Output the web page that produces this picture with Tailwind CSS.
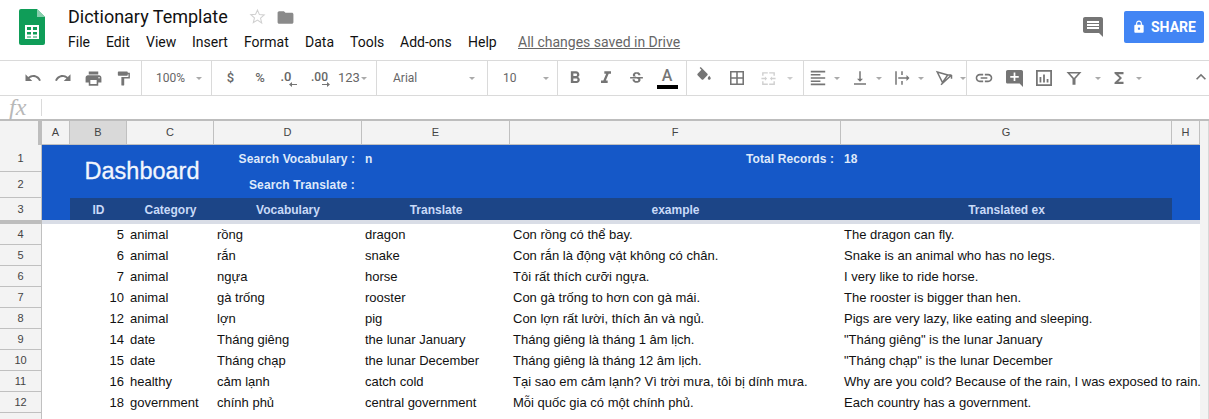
<!doctype html>
<html lang="en"><head><meta charset="utf-8"><title>Dictionary Template</title>
<script src="https://cdn.jsdelivr.net/npm/@tailwindcss/browser@4"></script></head>
<body class="w-[1209px] h-[419px] overflow-hidden bg-white font-['Roboto',sans-serif]">
<!-- title bar -->
<header class="relative h-[60px] flex pl-[19px] pt-[9px]">
  <svg class="w-[26px] h-[36px] shrink-0" viewBox="0 0 26 36"><path d="M2 0H18L26 8V34a2 2 0 0 1-2 2H2a2 2 0 0 1-2-2V2a2 2 0 0 1 2-2z" fill="#0f9d58"/><path d="M18 0L26 8H18z" fill="#87ceac"/><path fill="#fff" fill-rule="evenodd" d="M6 16H20V30H6zM8 18V21H12V18zM14 18V21H18V18zM8 23V25.500H12V23zM14 23V25.500H18V23zM8 27.500V28.500H12V27.500zM14 27.500V28.500H18V27.500z"/></svg>
  <div class="ml-[23px] flex flex-col">
    <div class="flex items-center h-[17px] mt-[-1px]">
      <span class="text-[18px] leading-[17px] text-[#111] w-[180px] whitespace-nowrap">Dictionary Template</span>
      <svg class="w-[17px] h-[17px] ml-[1px]" viewBox="0 0 24 24"><path d="M12 3l2.700 6.300 6.800.6-5.200 4.500 1.600 6.700L12 17l-5.900 3.600 1.600-6.700-5.200-4.500 6.800-.6z" fill="none" stroke="#d0d0d0" stroke-width="1.500"/></svg>
      <svg class="w-[19px] h-[19px] ml-[10px] translate-y-[1px]" viewBox="0 0 24 24"><path fill="#8a8a8a" d="M10 4H4c-1.100 0-2 .9-2 2v12c0 1.100.9 2 2 2h16c1.100 0 2-.9 2-2V8c0-1.100-.9-2-2-2h-8l-2-2z"/></svg>
    </div>
    <nav class="flex text-[14px] leading-[20px] text-[#111] mt-[7px] whitespace-nowrap">
      <span class="w-[38px]">File</span><span class="w-[40px]">Edit</span><span class="w-[46px]">View</span><span class="w-[52px]">Insert</span><span class="w-[61px]">Format</span><span class="w-[45px]">Data</span><span class="w-[50px]">Tools</span><span class="w-[68px]">Add-ons</span><span class="w-[50px]">Help</span><span class="text-[#666] underline">All changes saved in Drive</span>
    </nav>
  </div>
  <div class="absolute left-[1083px] top-[17px]"><svg class="w-[20px] h-[20px]" viewBox="2 2 20 20"><path fill="#757575" d="M21.990 4c0-1.100-.89-2-1.990-2H4c-1.100 0-2 .9-2 2v12c0 1.100.9 2 2 2h14l4 4-.01-18zM18 14H6v-2h12v2zm0-3H6V9h12v2zm0-3H6V6h12v2z"/></svg></div>
  <div class="absolute left-[1124px] top-[11px] w-[80px] h-[32px] rounded-[2px] bg-[#4285f4] flex items-center pl-[8px] text-white text-[14px] font-bold">
    <svg class="w-[14px] h-[14px]" viewBox="0 0 24 24"><path fill="#fff" d="M18 8h-1V6c0-2.760-2.240-5-5-5S7 3.240 7 6v2H6c-1.100 0-2 .9-2 2v10c0 1.100.9 2 2 2h12c1.100 0 2-.9 2-2V10c0-1.100-.9-2-2-2zm-6 9c-1.100 0-2-.9-2-2s.9-2 2-2 2 .9 2 2-.9 2-2 2zm3.100-9H8.900V6c0-1.710 1.390-3.100 3.100-3.100 1.710 0 3.100 1.390 3.100 3.100v2z"/></svg>
    <span class="ml-[5px]">SHARE</span>
  </div>
</header>
<!-- toolbar -->
<div class="h-[36px] border-y border-[#dadada] flex items-center text-[#666] text-[12px] whitespace-nowrap">
  <div class="w-[142px] h-full border-r border-[#dadada] flex items-center pl-[18px]">
    <span class="w-[30px] flex justify-center"><svg class="w-[18px] h-[18px]" viewBox="0 0 24 24"><path fill="#757575" d="M12.500 8c-2.650 0-5.050.99-6.900 2.600L2 7v9h9l-3.620-3.620c1.390-1.160 3.160-1.880 5.120-1.880 3.540 0 6.550 2.310 7.600 5.500l2.370-.78C21.080 11.030 17.150 8 12.500 8z"/></svg></span>
    <span class="w-[30px] flex justify-center"><svg class="w-[18px] h-[18px]" viewBox="0 0 24 24"><path fill="#757575" d="M18.400 10.600C16.550 8.990 14.150 8 11.500 8c-4.650 0-8.580 3.030-9.960 7.220L3.900 16c1.050-3.190 4.050-5.500 7.600-5.500 1.950 0 3.730.72 5.120 1.880L13 16h9V7l-3.600 3.600z"/></svg></span>
    <span class="w-[30px] flex justify-center"><svg class="w-[19px] h-[19px]" viewBox="0 0 24 24"><path fill="#757575" d="M19 8H5c-1.660 0-3 1.340-3 3v6h4v4h12v-4h4v-6c0-1.660-1.340-3-3-3zm-3 11H8v-5h8v5zm3-7c-.55 0-1-.45-1-1s.45-1 1-1 1 .45 1 1-.45 1-1 1zm-1-9H6v4h12V3z"/></svg></span>
    <span class="w-[30px] flex justify-center"><svg class="w-[17px] h-[17px]" viewBox="0 0 24 24"><path fill="#757575" d="M18 4V3c0-.55-.45-1-1-1H5c-.55 0-1 .45-1 1v4c0 .55.45 1 1 1h12c.55 0 1-.45 1-1V6h1v4H9v11c0 .55.45 1 1 1h2c.55 0 1-.45 1-1v-9h8V4h-3z"/></svg></span>
  </div>
  <div class="w-[70px] h-full border-r border-[#dadada] flex items-center pl-[14px]">
    <span class="w-[40px]">100%</span><span class="border-x-[3px] border-t-[3px] border-x-transparent border-t-[#aaa]"></span>
  </div>
  <div class="w-[165px] h-full border-r border-[#dadada] flex items-center text-[13px]">
    <span class="w-[37px] text-center font-medium">$</span>
    <span class="w-[30px] text-center font-medium ml-[-8px] pl-[8px]">%</span>
    <span class="w-[30px] relative text-center text-[13px] font-medium leading-[12px] -translate-y-[1px]">.0<svg class="absolute left-[18px] top-[11px] w-[8px] h-[5px]" viewBox="0 0 8 5"><path fill="#757575" d="M0 2.500L3 0V2H8V3H3V5z"/></svg></span>
    <span class="w-[30px] relative text-right pr-[3px] text-[12px] font-medium leading-[12px] -translate-y-[1px]">.00<svg class="absolute left-[21px] top-[11px] w-[8px] h-[5px]" viewBox="0 0 8 5"><path fill="#757575" d="M8 2.500L5 0V2H0V3H5V5z"/></svg></span>
    <span class="w-[30px] pl-[7px] text-[13px]">123</span><span class="border-x-[3px] border-t-[3px] border-x-transparent border-t-[#aaa]"></span>
  </div>
  <div class="w-[111px] h-full border-r border-[#dadada] flex items-center pl-[16px]">
    <span class="w-[76px]">Arial</span><span class="border-x-[3px] border-t-[3px] border-x-transparent border-t-[#aaa]"></span>
  </div>
  <div class="w-[70px] h-full border-r border-[#dadada] flex items-center pl-[15px]">
    <span class="w-[40px]">10</span><span class="border-x-[3px] border-t-[3px] border-x-transparent border-t-[#aaa]"></span>
  </div>
  <div class="w-[129px] h-full border-r border-[#dadada] flex items-center pl-[2px]">
    <span class="w-[30px] flex justify-center"><svg class="w-[20px] h-[20px]" viewBox="0 0 24 24"><path fill="#757575" d="M15.600 10.790c.97-.67 1.650-1.770 1.650-2.790 0-2.260-1.750-4-4-4H7v14h7.040c2.090 0 3.710-1.700 3.710-3.790 0-1.520-.86-2.820-2.150-3.420zM10 6.500h3c.83 0 1.500.67 1.500 1.500s-.67 1.500-1.500 1.500h-3v-3zm3.500 9H10v-3h3.500c.83 0 1.500.67 1.500 1.500s-.67 1.500-1.500 1.500z"/></svg></span>
    <span class="w-[31px] flex justify-center"><svg class="w-[20px] h-[20px]" viewBox="0 0 24 24"><path fill="#757575" d="M10 4v3h2.210l-3.420 8H6v3h8v-3h-2.210l3.420-8H18V4z"/></svg></span>
    <span class="w-[30px] flex justify-center"><svg class="w-[17px] h-[17px]" viewBox="0 0 24 24"><path fill="#757575" d="M7.240 8.750c-.26-.48-.39-1.030-.39-1.670 0-.61.13-1.160.4-1.670.26-.5.63-.93 1.110-1.290.48-.35 1.050-.63 1.700-.83.66-.19 1.390-.29 2.180-.29.81 0 1.540.11 2.210.34.66.22 1.230.54 1.690.94.47.4.83.88 1.080 1.430.25.55.38 1.150.38 1.810h-3.010c0-.31-.05-.59-.15-.85-.09-.27-.24-.49-.44-.68-.2-.19-.45-.33-.75-.44-.3-.1-.66-.16-1.060-.16-.39 0-.74.04-1.030.13-.29.09-.53.21-.72.36-.19.16-.34.34-.44.55-.1.21-.15.43-.15.66 0 .48.25.88.74 1.210.38.25.77.48 1.410.7H7.390c-.05-.08-.11-.17-.15-.25zM21 12v-2H3v2h9.620c.18.07.4.14.55.2.37.17.66.34.87.51.21.17.35.36.43.57.07.2.11.43.11.69 0 .23-.05.45-.14.66-.09.2-.23.38-.42.53-.19.15-.42.26-.71.35-.29.08-.63.13-1.010.13-.43 0-.83-.04-1.180-.13s-.66-.23-.91-.42c-.25-.19-.45-.44-.59-.75-.14-.31-.25-.76-.25-1.210H6.400c0 .55.08 1.130.24 1.580.16.45.37.85.65 1.210.28.35.6.66.98.92.37.26.78.48 1.220.65.44.17.9.3 1.380.39.48.08.96.13 1.440.13.8 0 1.530-.09 2.180-.28s1.210-.45 1.670-.79c.46-.34.82-.77 1.070-1.270s.38-1.070.38-1.710c0-.6-.1-1.140-.31-1.610-.05-.11-.11-.23-.17-.33H21z"/></svg></span>
    <span class="w-[32px] flex flex-col items-center"><span class="text-[16px] leading-[16px] text-[#757575] font-medium">A</span><span class="w-[21px] h-[4px] bg-black mt-[1px]"></span></span>
  </div>
  <div class="w-[117px] h-full border-r border-[#dadada] flex items-center pl-[2px]">
    <span class="w-[30px] flex justify-center"><svg class="w-[18px] h-[18px] -translate-y-[2px]" viewBox="0 0 24 24"><path fill="#757575" d="M16.560 8.940L7.620 0 6.210 1.410l2.380 2.380-5.150 5.150c-.59.59-.59 1.540 0 2.120l5.500 5.500c.29.29.68.44 1.060.44s.77-.15 1.060-.44l5.500-5.500c.59-.58.59-1.530 0-2.120zM19 11.500s-2 2.170-2 3.500c0 1.100.9 2 2 2s2-.9 2-2c0-1.330-2-3.500-2-3.500z"/></svg></span>
    <span class="w-[35px] flex justify-center"><svg class="w-[14px] h-[14px]" viewBox="3 3 18 18"><path fill="#757575" d="M3 3v18h18V3H3zm8 16H5v-6h6v6zm0-8H5V5h6v6zm8 8h-6v-6h6v6zm0-8h-6V5h6v6z"/></svg></span>
    <span class="w-[28px] flex justify-center"><svg class="w-[17px] h-[17px]" viewBox="0 0 24 24"><path fill="#d0d0d0" d="M3 3h8v2H5v3H3zM13 3h8v5h-2V5h-6zM3 16h2v3h6v2H3zM19 16h2v5h-8v-2h6zM2 11h5V9l3 3-3 3v-2H2zM22 11h-5V9l-3 3 3 3v-2h5z"/></svg></span>
    <span class="ml-[5px] border-x-[3px] border-t-[3px] border-x-transparent border-t-[#ccc]"></span>
  </div>
  <div class="w-[163px] h-full border-r border-[#dadada] flex items-center pl-[6px]">
    <span class="w-[17px] flex justify-center"><svg class="w-[16px] h-[16px] shrink-0" viewBox="2 2 20 20"><path fill="#757575" d="M15 15H3v2h12v-2zm0-8H3v2h12V7zM3 13h18v-2H3v2zm0 8h18v-2H3v2zM3 3v2h18V3H3z"/></svg></span>
    <span class="ml-[8px] mr-[11px] border-x-[3px] border-t-[3px] border-x-transparent border-t-[#aaa]"></span>
    <span class="w-[17px] flex justify-center"><svg class="w-[18px] h-[18px] shrink-0" viewBox="0 0 24 24"><path fill="#757575" d="M16 13h-3V3h-2v10H8l4 4 4-4zM4 19v2h16v-2H4z"/></svg></span>
    <span class="ml-[8px] mr-[11px] border-x-[3px] border-t-[3px] border-x-transparent border-t-[#aaa]"></span>
    <span class="w-[17px] flex justify-center"><svg class="w-[18px] h-[18px] shrink-0" viewBox="0 0 24 24"><path fill="#757575" d="M3 3h2v18H3zM11 3h2v5h-2zM11 16h2v5h-2zM7 11h11V8l4 4-4 4v-3H7z"/></svg></span>
    <span class="ml-[8px] mr-[11px] border-x-[3px] border-t-[3px] border-x-transparent border-t-[#aaa]"></span>
    <span class="w-[17px] flex justify-center"><svg class="w-[18px] h-[18px] shrink-0" viewBox="0 0 24 24"><path fill="none" stroke="#757575" stroke-width="2" d="M3 4L17 8 10 18zM8 21L22 8M22 8H17M22 8V13"/></svg></span>
    <span class="ml-[8px] border-x-[3px] border-t-[3px] border-x-transparent border-t-[#aaa]"></span>
  </div>
  <div class="relative flex-1 h-full flex items-center pl-[2px]">
    <span class="w-[30px] flex justify-center"><svg class="w-[20px] h-[20px]" viewBox="0 0 24 24"><path fill="#757575" d="M3.900 12c0-1.710 1.390-3.100 3.100-3.100h4V7H7c-2.760 0-5 2.240-5 5s2.240 5 5 5h4v-1.900H7c-1.710 0-3.100-1.390-3.100-3.100zM8 13h8v-2H8v2zm9-6h-4v1.900h4c1.710 0 3.100 1.390 3.100 3.100s-1.390 3.100-3.100 3.100h-4V17h4c2.760 0 5-2.240 5-5s-2.240-5-5-5z"/></svg></span>
    <span class="w-[30px] flex justify-center"><svg class="w-[17px] h-[17px]" viewBox="2 2 20 20"><path fill="#757575" d="M22 4c0-1.100-.89-2-2-2H4c-1.100 0-2 .9-2 2v12c0 1.100.9 2 2 2h14l4 4zM17 11h-4v4h-2v-4H7V9h4V5h2v4h4z"/></svg></span>
    <span class="w-[30px] flex justify-center"><svg class="w-[16px] h-[16px]" viewBox="3 3 18 18"><path fill="#757575" fill-rule="evenodd" d="M3 3H21V21H3zM5 5V19H19V5zM7 11H9V17H7zM11 8H13V17H11zM15 13H17V17H15z"/></svg></span>
    <span class="w-[30px] flex justify-center"><svg class="w-[18px] h-[18px]" viewBox="0 0 24 24"><path fill="#757575" fill-rule="evenodd" d="M2 4H22L14 13V21H10V13zM6.500 6L12 12 17.500 6z"/></svg></span>
    <span class="ml-[6px] mr-[9px] border-x-[3px] border-t-[3px] border-x-transparent border-t-[#aaa]"></span>
    <span class="w-[18px] flex justify-center"><svg class="w-[18px] h-[18px]" viewBox="0 0 24 24"><path fill="#757575" d="M18 4H6v2l6.500 6L6 18v2h12v-3h-7l5-5-5-5h7z"/></svg></span>
    <span class="ml-[8px] border-x-[3px] border-t-[3px] border-x-transparent border-t-[#aaa]"></span>
    <svg class="absolute left-[224px] top-[6px] w-[20px] h-[20px]" viewBox="0 0 24 24"><path fill="#757575" d="M7.410 15.410L12 10.830l4.590 4.580L18 14l-6-6-6 6z"/></svg>
  </div>
</div>
<!-- formula bar -->
<div class="h-[23px] flex items-center">
  <span class="w-[41px] pl-[9px] font-['Liberation_Serif',serif] italic text-[24px] leading-[23px] text-[#b8b8b8]">fx</span>
  <span class="w-px h-[17px] bg-[#dadada]"></span>
</div>
<!-- sheet -->
<div class="h-[300px] overflow-hidden grid grid-cols-[42px_28px_57px_87px_148px_148px_331px_331px_28px_9px] grid-rows-[24px_27px_26px_22px_4px_repeat(9,21px)_21px_5px] border-t-2 border-[#bdbdbd] text-[13px] font-['Liberation_Sans',Arial,sans-serif] text-[#111] whitespace-nowrap">
  <!-- column headers -->
  <div class="bg-[#f3f3f3] border-r-[4px] border-[#bdbdbd]"></div>
  <div class="bg-[#f3f3f3] border-r border-b border-[#c0c0c0] flex items-center justify-center text-[11px] text-[#444]">A</div>
  <div class="bg-[#d9d9d9] border-r border-b border-[#c0c0c0] flex items-center justify-center text-[11px] text-[#444]">B</div>
  <div class="bg-[#f3f3f3] border-r border-b border-[#c0c0c0] flex items-center justify-center text-[11px] text-[#444]">C</div>
  <div class="bg-[#f3f3f3] border-r border-b border-[#c0c0c0] flex items-center justify-center text-[11px] text-[#444]">D</div>
  <div class="bg-[#f3f3f3] border-r border-b border-[#c0c0c0] flex items-center justify-center text-[11px] text-[#444]">E</div>
  <div class="bg-[#f3f3f3] border-r border-b border-[#c0c0c0] flex items-center justify-center text-[11px] text-[#444]">F</div>
  <div class="bg-[#f3f3f3] border-r border-b border-[#c0c0c0] flex items-center justify-center text-[11px] text-[#444]">G</div>
  <div class="bg-[#f3f3f3] border-r border-b border-[#c0c0c0] flex items-center justify-center text-[11px] text-[#444]">H</div>
  <div class="row-span-16 bg-[#f3f3f3] border-r border-[#d8d8d8]"></div>
  <!-- row 1 -->
  <div class="bg-[#f3f3f3] border-r border-b border-[#c0c0c0] flex items-center justify-center text-[11px] text-[#444]">1</div>
  <div class="bg-[#1558c8]"></div>
  <div class="col-span-2 row-span-2 bg-[#1558c8] flex items-center justify-center text-[23.500px] text-[#f2f6fd] [-webkit-text-stroke:0.3px_#f2f6fd]">Dashboard</div>
  <div class="bg-[#1558c8] flex items-center justify-end pr-[7px] text-[12px] font-bold tracking-[0.1px] text-[#dfe9fa]">Search Vocabulary :</div>
  <div class="bg-[#1558c8] flex items-center pl-[3px] text-[12px] font-bold text-[#dfe9fa]">n</div>
  <div class="bg-[#1558c8] flex items-center justify-end pr-[7px] text-[12px] font-bold tracking-[0.1px] text-[#dfe9fa]">Total Records :</div>
  <div class="bg-[#1558c8] flex items-center pl-[3px] text-[12px] font-bold text-[#dfe9fa]">18</div>
  <div class="bg-[#1558c8]"></div>
  <!-- row 2 -->
  <div class="bg-[#f3f3f3] border-r border-b border-[#c0c0c0] flex items-center justify-center text-[11px] text-[#444]">2</div>
  <div class="bg-[#1558c8]"></div>
  <div class="bg-[#1558c8] flex items-center justify-end pr-[7px] text-[12px] font-bold tracking-[0.15px] text-[#dfe9fa]">Search Translate :</div>
  <div class="col-span-4 bg-[#1558c8]"></div>
  <!-- row 3 -->
  <div class="bg-[#f3f3f3] border-r border-[#c0c0c0] flex items-center justify-center text-[11px] text-[#444]">3</div>
  <div class="bg-[#1558c8]"></div>
  <div class="bg-[#1c4587] flex items-center justify-center pt-[1px] text-[12px] font-bold text-[#c9daf8]">ID</div>
  <div class="bg-[#1c4587] flex items-center justify-center pt-[1px] text-[12px] font-bold text-[#c9daf8]">Category</div>
  <div class="bg-[#1c4587] flex items-center justify-center pt-[1px] text-[12px] font-bold text-[#c9daf8]">Vocabulary</div>
  <div class="bg-[#1c4587] flex items-center justify-center pt-[1px] text-[12px] font-bold text-[#c9daf8]">Translate</div>
  <div class="bg-[#1c4587] flex items-center justify-center pt-[1px] text-[12px] font-bold text-[#c9daf8]">example</div>
  <div class="bg-[#1c4587] flex items-center justify-center pt-[1px] text-[12px] font-bold text-[#c9daf8]">Translated ex</div>
  <div class="bg-[#1558c8]"></div>
  <!-- frozen divider -->
  <div class="bg-[#bdbdbd]"></div>
  <div class="col-span-8 bg-[#d9dde6]"></div>
  <!-- row 4 -->
  <div class="bg-[#f3f3f3] border-r border-b border-[#c0c0c0] flex items-center justify-center text-[11px] text-[#444]">4</div><div></div>
  <div class="flex items-center justify-end pr-[3px]">5</div><div class="flex items-center pl-[3px]">animal</div><div class="flex items-center pl-[3px]">rồng</div><div class="flex items-center pl-[3px]">dragon</div><div class="flex items-center pl-[3px]">Con rồng có thể bay.</div><div class="flex items-center pl-[3px]">The dragon can fly.</div><div></div>
  <!-- row 5 -->
  <div class="bg-[#f3f3f3] border-r border-b border-[#c0c0c0] flex items-center justify-center text-[11px] text-[#444]">5</div><div></div>
  <div class="flex items-center justify-end pr-[3px]">6</div><div class="flex items-center pl-[3px]">animal</div><div class="flex items-center pl-[3px]">rắn</div><div class="flex items-center pl-[3px]">snake</div><div class="flex items-center pl-[3px]">Con rắn là động vật không có chân.</div><div class="flex items-center pl-[3px]">Snake is an animal who has no legs.</div><div></div>
  <!-- row 6 -->
  <div class="bg-[#f3f3f3] border-r border-b border-[#c0c0c0] flex items-center justify-center text-[11px] text-[#444]">6</div><div></div>
  <div class="flex items-center justify-end pr-[3px]">7</div><div class="flex items-center pl-[3px]">animal</div><div class="flex items-center pl-[3px]">ngựa</div><div class="flex items-center pl-[3px]">horse</div><div class="flex items-center pl-[3px]">Tôi rất thích cưỡi ngựa.</div><div class="flex items-center pl-[3px]">I very like to ride horse.</div><div></div>
  <!-- row 7 -->
  <div class="bg-[#f3f3f3] border-r border-b border-[#c0c0c0] flex items-center justify-center text-[11px] text-[#444]">7</div><div></div>
  <div class="flex items-center justify-end pr-[3px]">10</div><div class="flex items-center pl-[3px]">animal</div><div class="flex items-center pl-[3px]">gà trống</div><div class="flex items-center pl-[3px]">rooster</div><div class="flex items-center pl-[3px]">Con gà trống to hơn con gà mái.</div><div class="flex items-center pl-[3px]">The rooster is bigger than hen.</div><div></div>
  <!-- row 8 -->
  <div class="bg-[#f3f3f3] border-r border-b border-[#c0c0c0] flex items-center justify-center text-[11px] text-[#444]">8</div><div></div>
  <div class="flex items-center justify-end pr-[3px]">12</div><div class="flex items-center pl-[3px]">animal</div><div class="flex items-center pl-[3px]">lợn</div><div class="flex items-center pl-[3px]">pig</div><div class="flex items-center pl-[3px]">Con lợn rất lười, thích ăn và ngủ.</div><div class="flex items-center pl-[3px]">Pigs are very lazy, like eating and sleeping.</div><div></div>
  <!-- row 9 -->
  <div class="bg-[#f3f3f3] border-r border-b border-[#c0c0c0] flex items-center justify-center text-[11px] text-[#444]">9</div><div></div>
  <div class="flex items-center justify-end pr-[3px]">14</div><div class="flex items-center pl-[3px]">date</div><div class="flex items-center pl-[3px]">Tháng giêng</div><div class="flex items-center pl-[3px]">the lunar January</div><div class="flex items-center pl-[3px]">Tháng giêng là tháng 1 âm lịch.</div><div class="flex items-center pl-[3px]">"Tháng giêng" is the lunar January</div><div></div>
  <!-- row 10 -->
  <div class="bg-[#f3f3f3] border-r border-b border-[#c0c0c0] flex items-center justify-center text-[11px] text-[#444]">10</div><div></div>
  <div class="flex items-center justify-end pr-[3px]">15</div><div class="flex items-center pl-[3px]">date</div><div class="flex items-center pl-[3px]">Tháng chạp</div><div class="flex items-center pl-[3px]">the lunar December</div><div class="flex items-center pl-[3px]">Tháng giêng là tháng 12 âm lịch.</div><div class="flex items-center pl-[3px]">"Tháng chạp" is the lunar December</div><div></div>
  <!-- row 11 -->
  <div class="bg-[#f3f3f3] border-r border-b border-[#c0c0c0] flex items-center justify-center text-[11px] text-[#444]">11</div><div></div>
  <div class="flex items-center justify-end pr-[3px]">16</div><div class="flex items-center pl-[3px]">healthy</div><div class="flex items-center pl-[3px]">cảm lạnh</div><div class="flex items-center pl-[3px]">catch cold</div><div class="flex items-center pl-[3px]">Tại sao em cảm lạnh? Vì trời mưa, tôi bị dính mưa.</div><div class="flex items-center pl-[3px]">Why are you cold? Because of the rain, I was exposed to rain.</div><div></div>
  <!-- row 12 -->
  <div class="bg-[#f3f3f3] border-r border-b border-[#c0c0c0] flex items-center justify-center text-[11px] text-[#444]">12</div><div></div>
  <div class="flex items-center justify-end pr-[3px]">18</div><div class="flex items-center pl-[3px]">government</div><div class="flex items-center pl-[3px]">chính phủ</div><div class="flex items-center pl-[3px]">central government</div><div class="flex items-center pl-[3px]">Mỗi quốc gia có một chính phủ.</div><div class="flex items-center pl-[3px]">Each country has a government.</div><div></div>
  <!-- row 13 -->
  <div class="bg-[#f3f3f3] border-r border-[#c0c0c0]"></div>
</div>
</body></html>
